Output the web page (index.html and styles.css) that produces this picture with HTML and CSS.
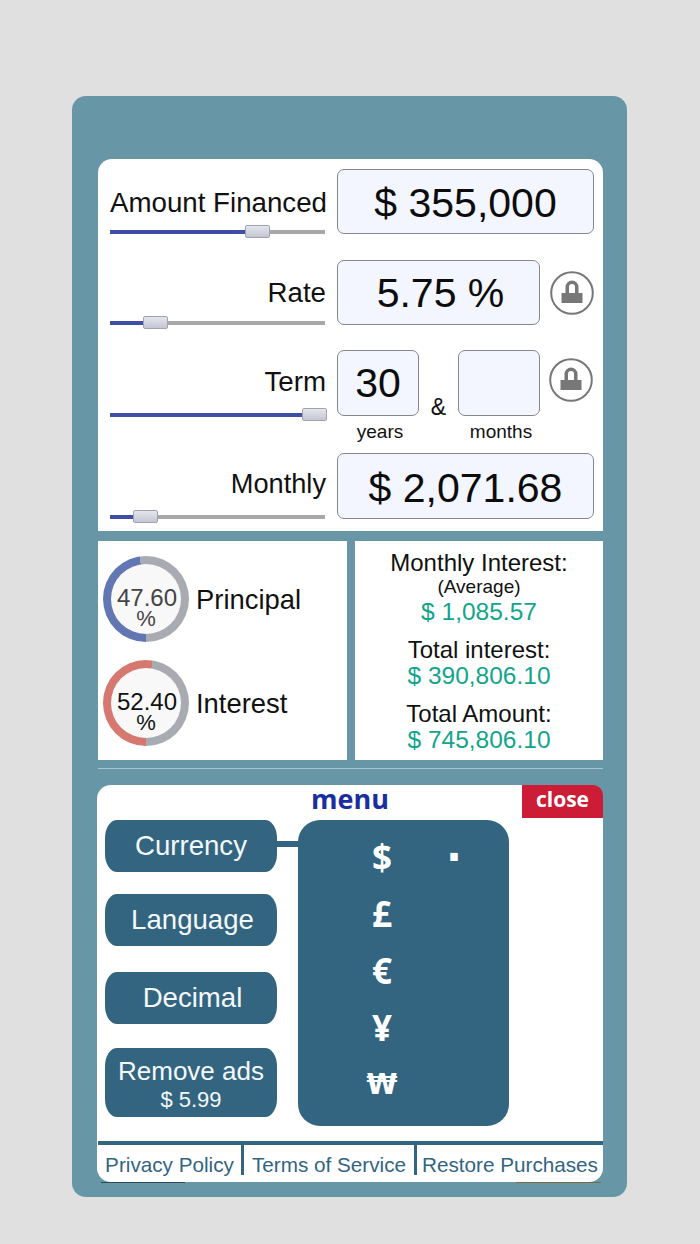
FILE: index.html
```html
<!DOCTYPE html>
<html lang="en">
<head>
    <meta charset="UTF-8">
    <meta name="viewport" content="width=device-width, initial-scale=1.0">
    <title>Mortgage Calculator</title>
    <link rel="stylesheet" href="styles.css">
</head>
<body>
    <div class="frame">
        <div class="calc-card">
            <div class="row row-amount">
                <div class="field">
                    <div class="field-label">Amount Financed</div>
                    <div class="slider"><div class="slider-fill" style="width: 68.4%"><span class="slider-thumb"></span></div></div>
                </div>
                <div class="value-box wide">$ 355,000</div>
            </div>
            <div class="row row-rate">
                <div class="field">
                    <div class="field-label">Rate</div>
                    <div class="slider"><div class="slider-fill" style="width: 21%"><span class="slider-thumb"></span></div></div>
                </div>
                <div class="value-box mid">5.75 %</div>
                <svg class="lock" viewBox="0 0 44 44">
                    <circle cx="22" cy="22" r="20.8" fill="#fff" stroke="#777" stroke-width="2"/>
                    <path d="M17.25 23v-7a4.75 4.75 0 0 1 9.5 0v7" fill="none" stroke="#777" stroke-width="3.5"/>
                    <rect x="11.5" y="22" width="21" height="10" rx="0.5" fill="#777"/>
                </svg>
            </div>
            <div class="row row-term">
                <div class="field">
                    <div class="field-label">Term</div>
                    <div class="slider"><div class="slider-fill" style="width: 100%"><span class="slider-thumb end"></span></div></div>
                </div>
                <div class="term-col">
                    <div class="value-box small">30</div>
                    <div class="term-unit">years</div>
                </div>
                <div class="amp">&amp;</div>
                <div class="term-col">
                    <div class="value-box small"></div>
                    <div class="term-unit">months</div>
                </div>
                <svg class="lock term-lock" viewBox="0 0 44 44">
                    <circle cx="22" cy="22" r="20.8" fill="#fff" stroke="#777" stroke-width="2"/>
                    <path d="M17.25 23v-7a4.75 4.75 0 0 1 9.5 0v7" fill="none" stroke="#777" stroke-width="3.5"/>
                    <rect x="11.5" y="22" width="21" height="10" rx="0.5" fill="#777"/>
                </svg>
            </div>
            <div class="row row-monthly">
                <div class="field">
                    <div class="field-label">Monthly</div>
                    <div class="slider"><div class="slider-fill" style="width: 16.5%"><span class="slider-thumb"></span></div></div>
                </div>
                <div class="value-box wide">$ 2,071.68</div>
            </div>
        </div>

        <div class="results">
            <div class="result-card donuts">
                <div class="donut-row">
                    <div class="donut blue" style="--pct: 47.6%">
                        <div class="donut-inner grey-text">47.60<span>%</span></div>
                    </div>
                    <div class="donut-label">Principal</div>
                </div>
                <div class="donut-row">
                    <div class="donut red" style="--pct: 52.4%">
                        <div class="donut-inner">52.40<span>%</span></div>
                    </div>
                    <div class="donut-label">Interest</div>
                </div>
            </div>
            <div class="result-card totals">
                <div class="total-title">Monthly Interest:</div>
                <div class="total-note">(Average)</div>
                <div class="total-value">$ 1,085.57</div>
                <div class="total-title spaced">Total interest:</div>
                <div class="total-value">$ 390,806.10</div>
                <div class="total-title spaced">Total Amount:</div>
                <div class="total-value">$ 745,806.10</div>
            </div>
        </div>

        <div class="hairline"></div>

        <div class="menu-card">
            <div class="menu-head">
                <div class="menu-title">menu</div>
                <div class="menu-close">close</div>
            </div>
            <div class="menu-body">
                <div class="menu-buttons">
                    <div class="menu-btn active">Currency</div>
                    <div class="menu-btn shift gap-a">Language</div>
                    <div class="menu-btn shift gap-b">Decimal</div>
                    <div class="menu-btn tall gap-c">Remove ads<small>$ 5.99</small></div>
                </div>
                <div class="currency-panel">
                    <div class="currency-item">$<span class="currency-dot">.</span></div>
                    <div class="currency-item">£</div>
                    <div class="currency-item">€</div>
                    <div class="currency-item">¥</div>
                    <div class="currency-item won">₩</div>
                </div>
            </div>
            <div class="menu-links">
                <div class="menu-link link-privacy">Privacy Policy</div>
                <div class="menu-link link-terms">Terms of Service</div>
                <div class="menu-link link-restore">Restore Purchases</div>
            </div>
            <span class="ad-sliver left"></span>
            <span class="ad-sliver right"></span>
        </div>
    </div>
</body>
</html>
```

FILE: styles.css
```css
* {
    margin: 0;
    padding: 0;
    box-sizing: border-box;
}

body {
    background: #e0e0e0;
    font-family: "Liberation Sans", Arial, sans-serif;
    color: #111;
    height: 1244px;
    overflow: hidden;
    padding: 96px 0 0 72px;
}

.frame {
    width: 555px;
    height: 1101px;
    background: #6797a6;
    border-radius: 14px;
    padding: 63px 24px 0 26px;
}

/* top card */
.calc-card {
    background: #fff;
    height: 372px;
    border-radius: 14px 14px 0 0;
    padding: 10px 9px 0 12px;
}

.row {
    display: flex;
    align-items: flex-start;
}

.row-rate {
    margin-top: 25px;
}

.row-term {
    margin-top: 24px;
    height: 103px;
}

.field {
    width: 216px;
    height: 66px;
    margin-right: 11px;
    display: flex;
    flex-direction: column;
    justify-content: flex-end;
}

.row-monthly .field {
    height: 67px;
}

.row-term .field {
    height: 68px;
}

.field-label {
    font-size: 27.7px;
    line-height: 32px;
    text-align: right;
    white-space: nowrap;
}

.row-amount .field-label { margin-bottom: 11px; }
.row-rate .field-label { margin-bottom: 12px; }
.row-term .field-label { margin-bottom: 15px; }
.row-monthly .field-label { margin-bottom: 15px; font-size: 27.2px; }

.slider {
    height: 4px;
    width: 215px;
    background: #a8a8a8;
    margin-bottom: 1px;
}

.slider-fill {
    height: 100%;
    background: #3f4ea6;
    position: relative;
}

.slider-thumb {
    position: absolute;
    right: -13px;
    top: -5px;
    width: 25px;
    height: 13px;
    border: 1px solid #a0a3ae;
    border-radius: 2px;
    background: linear-gradient(#e4e6ee, #c3c6d2);
}

.slider-thumb.end {
    right: -2px;
}

.value-box {
    height: 65px;
    background: #f3f6fe;
    border: 1px solid #85878c;
    border-radius: 7px;
    font-size: 41px;
    line-height: 65px;
    text-align: center;
    color: #0c0c0c;
}

.value-box.wide {
    width: 257px;
    line-height: 67px;
}

.row-monthly .value-box {
    height: 66px;
    line-height: 69px;
}

.value-box.mid {
    width: 203px;
    padding-left: 4px;
}

.value-box.small {
    width: 82px;
    height: 66px;
}

.lock {
    width: 44px;
    height: 44px;
    margin: 11px 0 0 10px;
}

.term-lock {
    margin: 8px 0 0 9px;
}

.term-col {
    width: 82px;
}

.term-unit {
    font-size: 19px;
    line-height: 22px;
    text-align: center;
    margin-top: 5px;
    padding-left: 4px;
}

.amp {
    width: 39px;
    font-size: 23px;
    text-align: center;
    margin-top: 44px;
}

/* results */
.results {
    display: flex;
    gap: 8px;
    margin-top: 10px;
}

.result-card {
    background: #fff;
    height: 219px;
}

.donuts {
    width: 249px;
    padding: 15px 0 0 5px;
}

.donut-row {
    display: flex;
    align-items: center;
    height: 86px;
}

.donut-row + .donut-row {
    margin-top: 18px;
}

.donut {
    width: 86px;
    height: 86px;
    border-radius: 50%;
    padding: 8px;
}

.donut.blue {
    background: conic-gradient(from 180deg, #6376b4 var(--pct), #a9abb3 0);
}

.donut.red {
    background: conic-gradient(from 180deg, #d5786f var(--pct), #a9abb3 0);
}

.donut-inner {
    width: 100%;
    height: 100%;
    border-radius: 50%;
    background: #f8f8f8;
    text-align: center;
    font-size: 24px;
    line-height: 24px;
    padding: 22px 0 0 2px;
}

.donut-inner span {
    display: block;
    font-size: 22px;
    line-height: 16px;
    margin: 1px 0 0 -2px;
}

.grey-text {
    color: #444;
}

.donut-label {
    font-size: 27.4px;
    margin: 2px 0 0 7px;
}

.totals {
    width: 248px;
    text-align: center;
    padding-top: 9px;
}

.total-title {
    font-size: 24px;
    line-height: 26px;
}

.total-title.spaced {
    margin-top: 12px;
}

.total-note {
    font-size: 19px;
    line-height: 22px;
    margin-bottom: 1px;
}

.total-value {
    font-size: 24.5px;
    line-height: 26px;
    color: #12a58a;
}

.hairline {
    height: 1px;
    background: #a9c4cd;
    margin-top: 8px;
}

/* menu */
.menu-card {
    background: #fff;
    width: 506px;
    height: 397px;
    margin: 16px 0 0 -1px;
    border-radius: 14px;
    position: relative;
}

.menu-head {
    height: 35px;
    position: relative;
}

.menu-title {
    text-align: center;
    font-family: "Open Sans", sans-serif;
    font-weight: 700;
    font-size: 27px;
    line-height: 27px;
    color: #1a2ea0;
}

.menu-close {
    position: absolute;
    right: 0;
    top: 0;
    width: 81px;
    height: 33px;
    background: #cc1c36;
    border-top-right-radius: 10px;
    color: #fff;
    font-family: "Open Sans", sans-serif;
    font-weight: 700;
    font-size: 21px;
    line-height: 29px;
    text-align: center;
}

.menu-body {
    display: flex;
    height: 321px;
    padding-left: 8px;
}

.menu-buttons {
    width: 172px;
    margin-right: 21px;
}

.menu-btn {
    height: 52px;
    background: #336580;
    color: #f4f8fa;
    border-radius: 12px / 18px;
    font-size: 27.6px;
    line-height: 52px;
    text-align: center;
    position: relative;
}

.menu-btn.active::after {
    content: "";
    position: absolute;
    left: 100%;
    top: 21px;
    width: 21px;
    height: 6px;
    background: #336580;
}

.menu-btn.shift {
    padding-left: 3px;
}

.gap-a { margin-top: 22px; }
.gap-b { margin-top: 26px; }
.gap-c { margin-top: 24px; }

.menu-btn.tall {
    height: 69px;
    font-size: 26px;
    line-height: 30px;
    padding-top: 8px;
}

.menu-btn small {
    display: block;
    font-size: 22px;
    line-height: 28px;
}

.currency-panel {
    width: 211px;
    height: 306px;
    background: #336580;
    border-radius: 22px;
    padding-top: 8px;
}

.currency-item {
    height: 57px;
    width: 168px;
    line-height: 57px;
    text-align: center;
    font-family: "Noto Sans", "Liberation Sans", sans-serif;
    font-weight: 700;
    font-size: 35px;
    color: #fff;
    position: relative;
}

.currency-item.won {
    font-family: "DejaVu Sans", sans-serif;
    font-size: 28px;
}

.currency-dot {
    position: absolute;
    left: 148px;
    top: -10px;
    font-family: "DejaVu Sans", sans-serif;
    font-size: 42px;
}

.menu-links {
    display: flex;
    border-top: 4px solid #336580;
    height: 41px;
    margin-left: 1px;
    width: 505px;
}

.menu-link {
    font-size: 20.7px;
    line-height: 39px;
    height: 30px;
    color: #336580;
    white-space: nowrap;
    text-align: center;
}

.link-privacy {
    width: 146px;
    border-right: 3px solid #336580;
}

.link-terms {
    width: 173px;
    border-right: 3px solid #336580;
}

.link-restore {
    flex: 1;
}

.ad-sliver {
    position: absolute;
    bottom: -1px;
    height: 1px;
}

.ad-sliver.left {
    left: 4px;
    width: 84px;
    background: #2c4a58;
}

.ad-sliver.right {
    right: 2px;
    width: 85px;
    background: #7a6a44;
}
```
